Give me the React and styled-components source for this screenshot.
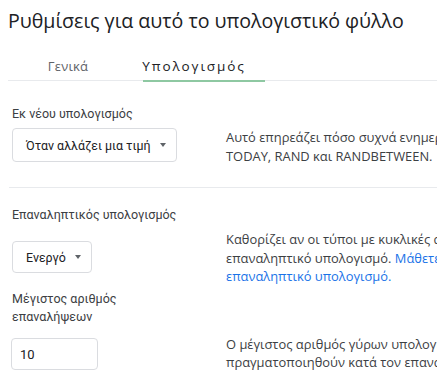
import React from 'react';
import styled, { createGlobalStyle } from 'styled-components';

const GlobalStyle = createGlobalStyle`
  html, body {
    margin: 0;
    padding: 0;
    overflow: hidden;
    background: #fff;
  }
  body {
    font-family: Roboto, "Noto Sans", Arial, sans-serif;
    color: #3c4043;
  }
`;

const Dialog = styled.div`
  width: 700px;
  padding: 6px 0 0 8px;
  box-sizing: border-box;
`;

const Title = styled.h1`
  margin: 0;
  font-family: "Open Sans", Roboto, sans-serif;
  font-weight: 400;
  font-size: 19.6px;
  line-height: 30px;
  color: #202124;
`;

const TabBar = styled.div`
  display: flex;
  margin-top: 20px;
  border-bottom: 1px solid #e8eaed;
  height: 24px;
`;

const Tab = styled.div`
  position: relative;
  width: ${(p) => p.$width}px;
  text-align: center;
  font-family: "Open Sans", Roboto, sans-serif;
  font-size: ${(p) => (p.$active ? '13.5px' : '13px')};
  line-height: 20px;
  letter-spacing: ${(p) => (p.$active ? '1.9px' : '0.2px')};
  color: ${(p) => (p.$active ? '#202124' : '#5f6368')};

  ${(p) =>
    p.$active &&
    `
    &::after {
      content: '';
      position: absolute;
      left: 15px;
      right: -5px;
      bottom: -2px;
      height: 2px;
      background: #8ec8a2;
    }
  `}
`;

const Section = styled.div`
  display: grid;
  grid-template-columns: 217px 1fr;
  padding: ${(p) => p.$pad};
  border-bottom: ${(p) => (p.$divider ? '1px solid #e8eaed' : 'none')};
  margin-left: 1px;
`;

const Controls = styled.div`
  display: flex;
  flex-direction: column;
  padding-left: 3px;
`;

const Label = styled.div`
  font-size: 12.5px;
  line-height: 18px;
  color: #3c4043;
  margin-top: ${(p) => p.$top || 0}px;
  margin-bottom: ${(p) => p.$gap}px;
  max-width: ${(p) => p.$max || 200}px;
`;

const Select = styled.div`
  display: inline-flex;
  align-self: flex-start;
  align-items: center;
  gap: 9px;
  height: ${(p) => p.$h}px;
  box-sizing: border-box;
  padding: 0 10px 0 13px;
  border: 1px solid #dadce0;
  border-radius: 4px;
  font-size: 12.4px;
  color: #202124;
`;

const Caret = styled.span`
  width: 0;
  height: 0;
  border-left: 3.5px solid transparent;
  border-right: 3.5px solid transparent;
  border-top: 4px solid #5f6368;
`;

const Input = styled.div`
  width: 87px;
  height: 32px;
  margin-left: -1px;
  box-sizing: border-box;
  border: 1px solid #dadce0;
  border-radius: 4px;
  padding: 0 8px;
  display: flex;
  align-items: center;
  font-size: 13px;
  color: #202124;
`;

const Description = styled.p`
  margin: ${(p) => p.$top}px 0 0 0;
  font-family: "Open Sans", Roboto, sans-serif;
  font-size: 12.9px;
  line-height: 18.5px;
  color: #3c4043;
  white-space: nowrap;
`;

const Link = styled.a`
  color: #1a73e8;
  text-decoration: none;
`;

export default function App() {
  return (
    <>
      <GlobalStyle />
      <Dialog>
        <Title>Ρυθμίσεις για αυτό το υπολογιστικό φύλλο</Title>
        <TabBar>
          <Tab $width={120}>Γενικά</Tab>
          <Tab $width={132} $active>Υπολογισμός</Tab>
        </TabBar>

        <Section $pad="24px 0 22px 0" $divider>
          <Controls>
            <Label $gap={5}>Εκ νέου υπολογισμός</Label>
            <Select $h={34}>
              Όταν αλλάζει μια τιμή <Caret />
            </Select>
          </Controls>
          <Description $top={23}>
            Αυτό επηρεάζει πόσο συχνά ενημερώνονται οι συναρτήσεις NOW,
            <br />
            TODAY, RAND και RANDBETWEEN.
          </Description>
        </Section>

        <Section $pad="18px 0 10px 0">
          <Controls>
            <Label $gap={17}>Επαναληπτικός υπολογισμός</Label>
            <Select $h={32}>
              Ενεργό <Caret />
            </Select>
            <Label $top={17} $gap={12} $max={130}>
              Μέγιστος αριθμός επαναλήψεων
            </Label>
            <Input>10</Input>
          </Controls>
          <div>
            <Description $top={24}>
              Καθορίζει αν οι τύποι με κυκλικές αναφορές θα επιλύονται με
              <br />
              επαναληπτικό υπολογισμό.{' '}
              <Link href="#">Μάθετε περισσότερα σχετικά με τον</Link>
              <br />
              <Link href="#">επαναληπτικό υπολογισμό.</Link>
            </Description>
            <Description $top={49}>
              Ο μέγιστος αριθμός γύρων υπολογισμού που μπορούν να
              <br />
              πραγματοποιηθούν κατά τον επαναληπτικό υπολογισμό.
            </Description>
          </div>
        </Section>
      </Dialog>
    </>
  );
}
